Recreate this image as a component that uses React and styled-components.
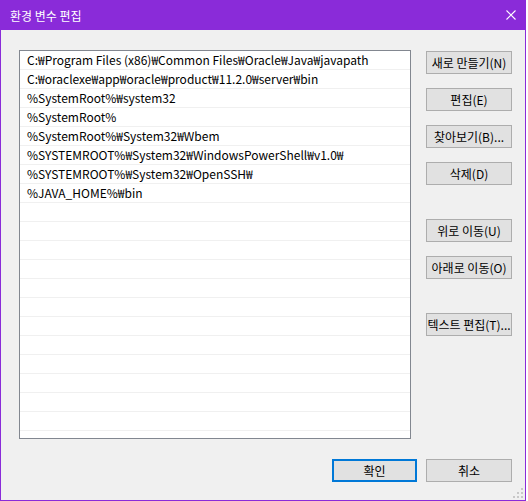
import styled, { createGlobalStyle } from "styled-components";

const GlobalStyle = createGlobalStyle`
  html, body {
    margin: 0;
    padding: 0;
    background: #ffffff;
  }
  * {
    box-sizing: border-box;
  }
`;

const FONT = `"Segoe UI", "Malgun Gothic", "Noto Sans CJK KR", "Noto Sans", sans-serif`;

const paths = [
  "C:\u20A9Program Files (x86)\u20A9Common Files\u20A9Oracle\u20A9Java\u20A9javapath",
  "C:\u20A9oraclexe\u20A9app\u20A9oracle\u20A9product\u20A911.2.0\u20A9server\u20A9bin",
  "%SystemRoot%\u20A9system32",
  "%SystemRoot%",
  "%SystemRoot%\u20A9System32\u20A9Wbem",
  "%SYSTEMROOT%\u20A9System32\u20A9WindowsPowerShell\u20A9v1.0\u20A9",
  "%SYSTEMROOT%\u20A9System32\u20A9OpenSSH\u20A9",
  "%JAVA_HOME%\u20A9bin",
];

const sideButtons = [
  { label: "새로 만들기(N)", gap: 0 },
  { label: "편집(E)", gap: 14 },
  { label: "찾아보기(B)...", gap: 14 },
  { label: "삭제(D)", gap: 14 },
  { label: "위로 이동(U)", gap: 34 },
  { label: "아래로 이동(O)", gap: 14 },
  { label: "텍스트 편집(T)...", gap: 34 },
];

const StyledWindow = styled.div`
  width: 526px;
  height: 501px;
  display: flex;
  flex-direction: column;
  border: 1px solid #8a2bd9;
  border-top: none;
  font-family: ${FONT};
  font-size: 12px;
  color: #000;
`;

const StyledTitleBar = styled.div`
  height: 30px;
  flex: none;
  display: flex;
  align-items: center;
  justify-content: space-between;
  padding-left: 9px;
  padding-right: 9px;
  background-color: #8a2bd9;
  color: #ffffff;
`;

const StyledBody = styled.div`
  flex: 1;
  display: flex;
  flex-direction: column;
  padding: 20px 13px 0 18px;
  background-color: #f0f0f0;
  position: relative;
`;

const StyledMain = styled.div`
  display: flex;
  gap: 15px;
`;

const StyledList = styled.div`
  width: 392px;
  height: 389px;
  border: 1px solid #828790;
  background: #ffffff;
  overflow: hidden;
`;

const StyledRow = styled.div`
  height: 19px;
  line-height: 18px;
  padding-left: 7px;
  border-bottom: 1px solid #f0f0f0;
  white-space: nowrap;
`;

const StyledButtonColumn = styled.div`
  display: flex;
  flex-direction: column;
  padding-top: 1px;
`;

const StyledButton = styled.button`
  width: ${(p) => p.$width || 86}px;
  height: 23px;
  margin-top: ${(p) => p.$gap || 0}px;
  padding: 0;
  font-family: ${FONT};
  font-size: 12px;
  color: #000;
  background-color: #e1e1e1;
  border: ${(p) => (p.$default ? "2px solid #0078d7" : "1px solid #adadad")};
  white-space: nowrap;
`;

const StyledFooter = styled.div`
  display: flex;
  justify-content: flex-end;
  gap: 9px;
  margin-top: 20px;
`;

const StyledGrip = styled.svg`
  position: absolute;
  right: 2px;
  bottom: 2px;
`;

const CloseIcon = () => (
  <svg width="10" height="10" viewBox="0 0 10 10">
    <path d="M0.5 0.5 L9.5 9.5 M9.5 0.5 L0.5 9.5" stroke="#fff" strokeWidth="1.1" />
  </svg>
);

const Grip = () => (
  <StyledGrip width="10" height="10" viewBox="0 0 10 10">
    {[
      [8, 0], [8, 4], [4, 4], [8, 8], [4, 8], [0, 8],
    ].map(([x, y]) => (
      <rect key={`${x}-${y}`} x={x} y={y} width="2" height="2" fill="#c8c8c8" />
    ))}
  </StyledGrip>
);

const App = () => {
  const rows = [...paths, ...Array(21 - paths.length).fill("")];
  return (
    <>
      <GlobalStyle />
      <StyledWindow>
        <StyledTitleBar>
          <span>환경 변수 편집</span>
          <CloseIcon />
        </StyledTitleBar>
        <StyledBody>
          <StyledMain>
            <StyledList>
              {rows.map((text, i) => (
                <StyledRow key={i}>{text}</StyledRow>
              ))}
            </StyledList>
            <StyledButtonColumn>
              {sideButtons.map((b) => (
                <StyledButton key={b.label} $gap={b.gap}>
                  {b.label}
                </StyledButton>
              ))}
            </StyledButtonColumn>
          </StyledMain>
          <StyledFooter>
            <StyledButton $width={85} $default>
              확인
            </StyledButton>
            <StyledButton>취소</StyledButton>
          </StyledFooter>
          <Grip />
        </StyledBody>
      </StyledWindow>
    </>
  );
};

export default App;
